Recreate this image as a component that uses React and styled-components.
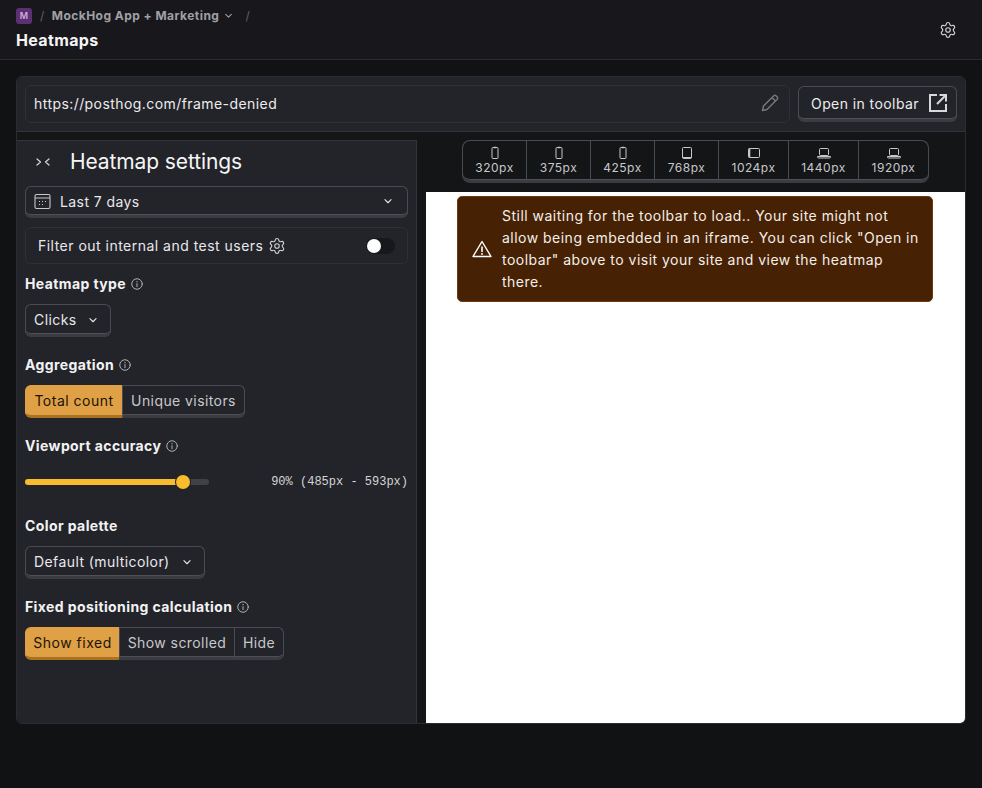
import React from 'react'
import styled, { createGlobalStyle } from 'styled-components'
import { Settings } from 'lucide-react'

const GlobalStyle = createGlobalStyle`
  html, body {
    margin: 0;
    padding: 0;
    height: 100%;
    background: #111214;
  }
  body {
    font-family: Inter, "Liberation Sans", sans-serif;
    color: #f2f2f2;
    -webkit-font-smoothing: antialiased;
  }
  * {
    box-sizing: border-box;
  }
`

const Page = styled.div`
  width: 982px;
  height: 788px;
  overflow: hidden;
  background: #111214;
`

const Header = styled.header`
  height: 60px;
  padding: 8px 16px 0;
  background: #18181c;
  border-bottom: 1px solid #2b2c32;
  display: flex;
  justify-content: space-between;
`

const Crumbs = styled.div`
  display: flex;
  align-items: center;
  height: 16px;
  font-size: 12px;
  font-weight: 700;
  letter-spacing: 0.46px;
  line-height: 14px;
  color: #a0a1a6;
`

const CrumbText = styled.span`
  display: flex;
  align-items: center;
  margin-top: -1px;
`

const Avatar = styled.span`
  width: 16px;
  height: 16px;
  border-radius: 3px;
  background: #5d2f73;
  color: #c9b0d6;
  font-size: 9px;
  font-weight: 600;
  letter-spacing: 0;
  display: flex;
  align-items: center;
  justify-content: center;
`

const Slash = styled.span`
  color: #5f6066;
  font-weight: 400;
  margin: ${p => p.$margin};
`

const CrumbChevron = styled.span`
  display: flex;
  margin-left: 3px;
`

const PageTitle = styled.h1`
  margin: 6px 0 0;
  font-size: 16px;
  line-height: 20px;
  font-weight: 700;
  letter-spacing: 0.35px;
  color: #f5f5f5;
`

const IconButton = styled.button`
  border: 0;
  padding: 0;
  margin: 13px 9px 0 0;
  width: 18px;
  height: 18px;
  background: none;
  color: #d5d5d8;
  display: flex;
`

const Card = styled.section`
  margin: 16px 16px 0;
  width: 950px;
  height: 648px;
  border: 1px solid #2b2c32;
  border-radius: 6px;
  overflow: hidden;
  background: #141517;
  display: flex;
  flex-direction: column;
`

const UrlBar = styled.div`
  height: 55px;
  flex: none;
  padding: 8px 8px 0;
  background: #23242a;
  border-bottom: 1px solid #33343a;
  display: flex;
  gap: 8px;
`

const UrlInput = styled.div`
  width: 765px;
  height: 38px;
  padding: 0 9px 2px 8px;
  border: 1px solid #2f3036;
  border-radius: 6px;
  background: #23242a;
  display: flex;
  align-items: center;
  justify-content: space-between;
  font-size: 14px;
  letter-spacing: 0.43px;
  color: #ededee;
`

const Raised = styled.button`
  font-family: inherit;
  color: ${p => (p.$active ? '#1b1407' : '#e4e4e6')};
  background: ${p => (p.$active ? '#e0a045' : 'transparent')};
  border: 1px solid ${p => (p.$active ? '#e0a045' : '#4a4b52')};
  border-bottom: 3px solid ${p => (p.$active ? '#a9721f' : '#3b3c42')};
  box-shadow: ${p => (p.$active ? 'none' : 'inset 0 -1px 0 #4f5057')};
  font-size: 14px;
  letter-spacing: 0.42px;
  display: flex;
  align-items: center;
  padding: 0;
`

const ToolbarButton = styled(Raised)`
  width: 159px;
  height: 36px;
  margin-top: 1px;
  padding: 0 8px 0 12px;
  justify-content: space-between;
  border-radius: 6px;
  color: #ededee;
`

const Body = styled.div`
  flex: 1;
  min-height: 0;
  display: flex;
`

const Sidebar = styled.aside`
  width: 400px;
  flex: none;
  margin-top: 8px;
  padding: 0 8px;
  background: #23242a;
  border-top: 1px solid #33343a;
  border-right: 1px solid #33343a;
  display: flex;
  flex-direction: column;
`

const SidebarHead = styled.div`
  height: 45px;
  padding-bottom: 4px;
  display: flex;
  align-items: center;
  color: #d8d8da;
`

const CollapseIcon = styled.span`
  display: flex;
  width: 37px;
  margin-left: 10px;
`

const SidebarTitle = styled.h2`
  margin: 0 0 0 -2px;
  font-size: 21px;
  line-height: 28px;
  font-weight: 400;
  letter-spacing: -0.1px;
  color: #f5f5f5;
`

const DateSelect = styled(Raised)`
  width: 383px;
  height: 32px;
  padding: 0 12px 0 8px;
  border-radius: 6px;
  gap: 9px;
  color: #e8e8ea;
`

const Grow = styled.span`
  flex: 1;
  text-align: left;
`

const FilterRow = styled.div`
  margin-top: 9px;
  width: 383px;
  height: 37px;
  padding: 0 12px;
  border: 1px solid #2f3036;
  border-radius: 6px;
  display: flex;
  align-items: center;
  font-size: 14px;
  letter-spacing: 0.48px;
  color: #e8e8ea;
`

const FilterIcon = styled.span`
  display: flex;
  margin-left: 5px;
  flex: 1;
  color: #cfcfd2;
`

const Switch = styled.span`
  width: 29px;
  height: 16px;
  border-radius: 8px;
  background: #17181b;
  display: flex;
  align-items: center;
  &::before {
    content: '';
    width: 14px;
    height: 14px;
    margin-left: 1px;
    border-radius: 50%;
    background: #fff;
  }
`

const Label = styled.div`
  margin-top: ${p => p.$top || 0}px;
  height: 20px;
  padding-bottom: 1px;
  display: flex;
  align-items: center;
  gap: 4px;
  font-size: 14px;
  font-weight: 700;
  letter-spacing: 0.4px;
  color: #f2f2f3;
  svg {
    color: #b4b4b8;
  }
`

const Select = styled(Raised)`
  margin-top: 10px;
  width: ${p => p.$width}px;
  height: 33px;
  padding: 0 ${p => p.$right}px 0 8px;
  border-radius: 6px;
  justify-content: space-between;
  color: #e8e8ea;
`

const Segmented = styled.div`
  margin-top: 10px;
  display: flex;
  height: 33px;
`

const Segment = styled(Raised)`
  width: ${p => p.$width}px;
  height: 33px;
  justify-content: center;
  margin-left: ${p => (p.$first ? 0 : -1)}px;
  color: ${p => (p.$active ? '#1b1407' : '#c8c8cb')};
  letter-spacing: ${p => (p.$active ? 0.5 : 0.42)}px;
  border-radius: ${p => (p.$first ? '6px 0 0 6px' : p.$last ? '0 6px 6px 0' : '0')};
`

const SliderRow = styled.div`
  margin-top: 18px;
  height: 16px;
  display: flex;
  align-items: center;
  justify-content: space-between;
`

const Track = styled.div`
  position: relative;
  width: 184px;
  height: 6px;
  border-radius: 3px;
  background: #404147;
`

const Fill = styled.div`
  height: 6px;
  border-radius: 3px;
  background: #f8bc2d;
`

const Thumb = styled.div`
  position: absolute;
  top: -4px;
  width: 14px;
  height: 14px;
  border-radius: 50%;
  background: #f8bc2d;
  box-shadow: 0 0 0 1px #23242a;
`

const SliderValue = styled.span`
  font-family: "Liberation Mono", monospace;
  font-size: 12px;
  color: #d4d4d6;
`

const Preview = styled.div`
  flex: 1;
  min-width: 0;
  display: flex;
  flex-direction: column;
`

const ViewportBar = styled.div`
  height: 60px;
  flex: none;
  padding: 8px 0 0 45px;
  display: flex;
`

const ViewportGroup = styled.div`
  display: flex;
  height: 43px;
  border: 1px solid #4a4b52;
  border-bottom: 3px solid #3b3c42;
  box-shadow: inset 0 -1px 0 #4f5057;
  border-radius: 8px;
  overflow: hidden;
`

const Viewport = styled.div`
  width: ${p => p.$width}px;
  padding-top: 5px;
  display: flex;
  flex-direction: column;
  align-items: center;
  font-size: 12px;
  line-height: 16px;
  letter-spacing: 0.5px;
  color: #c8c8cb;
  & + & {
    border-left: 1px solid #4a4b52;
  }
  svg {
    display: block;
  }
`

const Frame = styled.div`
  flex: 1;
  margin-left: 9px;
  background: #fff;
  padding: 4px 0 0 31px;
`

const Banner = styled.div`
  width: 476px;
  height: 106px;
  padding: 0 10px 0 14px;
  background: #472104;
  border: 1px solid #6d3a10;
  border-radius: 5px;
  display: flex;
  align-items: center;
  gap: 10px;
  font-size: 14px;
  line-height: 22px;
  letter-spacing: 0.48px;
  color: #f3efe9;
  svg {
    flex: none;
  }
`

const Chevron = ({ size = 14 }) => (
  <svg width={size} height={size} viewBox="0 0 16 16" fill="none" stroke="currentColor" strokeWidth="1.25" strokeLinecap="round" strokeLinejoin="round">
    <path d="M4.5 6.5 8 10l3.5-3.5" />
  </svg>
)

const Info = () => (
  <svg width="14" height="14" viewBox="0 0 16 16" fill="none" stroke="currentColor" strokeWidth="1.1" strokeLinecap="round">
    <circle cx="8" cy="8" r="6" />
    <path d="M8 7.5V11" />
    <path d="M8 5.2v.1" strokeWidth="1.4" />
  </svg>
)

const Pencil = () => (
  <svg width="20" height="20" viewBox="0 0 20 20" fill="none" stroke="#77787d" strokeWidth="1.4" strokeLinejoin="round">
    <path d="M2.5 17.5 3.5 13 13.8 2.8a1.6 1.6 0 0 1 2.2 0l1.2 1.2a1.6 1.6 0 0 1 0 2.2L7 16.5z" />
    <path d="m12 4.5 3.5 3.5" />
  </svg>
)

const OpenIcon = () => (
  <svg width="20" height="20" viewBox="0 0 20 20" fill="none" stroke="#d8d8da" strokeWidth="2">
    <path d="M9 2H2v16h16v-7" />
    <path d="M11.5 2H18v6.5M18 2 9 11" />
  </svg>
)

const Calendar = () => (
  <svg width="17" height="17" viewBox="0 0 17 17" fill="none" stroke="#c8c8cb" strokeWidth="1.1">
    <rect x="1" y="1.5" width="15" height="14" rx="1.5" />
    <path d="M1 5h15" />
    <path d="M5 8.5h1M8 8.5h1M11 8.5h1M5 11.5h1M8 11.5h1" strokeDasharray="1 1" />
  </svg>
)

const Collapse = () => (
  <svg width="16" height="12" viewBox="0 0 16 12" fill="none" stroke="currentColor" strokeWidth="1.2" strokeLinecap="round" strokeLinejoin="round">
    <path d="m2 3 3.5 3L2 9" />
    <path d="M14 3 10.5 6 14 9" />
  </svg>
)

const Warning = () => (
  <svg width="20" height="20" viewBox="0 0 20 20" fill="none" stroke="#fff" strokeWidth="1.4" strokeLinejoin="round" strokeLinecap="round">
    <path d="M10 2.5 19 17.5H1z" />
    <path d="M10 8v4.5" strokeWidth="1.6" />
    <path d="M10 14.8v.2" strokeWidth="1.8" />
  </svg>
)

const DeviceIcon = ({ type }) => {
  if (type === 'phone') {
    return (
      <svg width="16" height="14" viewBox="0 0 16 14" fill="none" stroke="#c8c8cb" strokeWidth="1">
        <rect x="5" y="1.5" width="6" height="11" rx="1" />
        <path d="M7 1.5h2" strokeWidth="1.4" />
      </svg>
    )
  }
  if (type === 'tablet') {
    return (
      <svg width="16" height="14" viewBox="0 0 16 14" fill="none" stroke="#c8c8cb" strokeWidth="1">
        <rect x="3.5" y="1.5" width="9" height="11" rx="1" />
        <path d="M3.5 11.5h9" />
      </svg>
    )
  }
  if (type === 'wide') {
    return (
      <svg width="16" height="14" viewBox="0 0 16 14" fill="none" stroke="#c8c8cb" strokeWidth="1">
        <rect x="2.5" y="2.5" width="11" height="9" rx="1" />
        <path d="M3.5 2.5v9" strokeWidth="1.6" />
      </svg>
    )
  }
  return (
    <svg width="16" height="14" viewBox="0 0 16 14" fill="none" stroke="#c8c8cb" strokeWidth="1">
      <rect x="3.5" y="2.5" width="9" height="7" rx="1" />
      <path d="M1.5 10.5h13v.5a1 1 0 0 1-1 1h-11a1 1 0 0 1-1-1z" />
    </svg>
  )
}

const viewports = [
  { label: '320px', type: 'phone', width: 63 },
  { label: '375px', type: 'phone', width: 64 },
  { label: '425px', type: 'phone', width: 64 },
  { label: '768px', type: 'tablet', width: 64 },
  { label: '1024px', type: 'wide', width: 70 },
  { label: '1440px', type: 'laptop', width: 70 },
  { label: '1920px', type: 'laptop', width: 70 }
]

function App() {
  return (
    <Page>
      <GlobalStyle />
      <Header>
        <div>
          <Crumbs>
            <Avatar>M</Avatar>
            <Slash $margin="0 7px 0 8px">/</Slash>
            <CrumbText>
              MockHog App + Marketing
              <CrumbChevron><Chevron size={13} /></CrumbChevron>
              <Slash $margin="0 0 0 10px">/</Slash>
            </CrumbText>
          </Crumbs>
          <PageTitle>Heatmaps</PageTitle>
        </div>
        <IconButton><Settings size={18} strokeWidth={1.5} /></IconButton>
      </Header>
      <Card>
        <UrlBar>
          <UrlInput>
            https://posthog.com/frame-denied
            <Pencil />
          </UrlInput>
          <ToolbarButton>
            Open in toolbar
            <OpenIcon />
          </ToolbarButton>
        </UrlBar>
        <Body>
          <Sidebar>
            <SidebarHead>
              <CollapseIcon><Collapse /></CollapseIcon>
              <SidebarTitle>Heatmap settings</SidebarTitle>
            </SidebarHead>
            <DateSelect>
              <Calendar />
              <Grow>Last 7 days</Grow>
              <Chevron />
            </DateSelect>
            <FilterRow>
              Filter out internal and test users
              <FilterIcon><Settings size={18} strokeWidth={1.5} /></FilterIcon>
              <Switch />
            </FilterRow>
            <Label $top={10}>Heatmap type <Info /></Label>
            <Select $width={86} $right={10}>Clicks <Chevron /></Select>
            <Label $top={18}>Aggregation <Info /></Label>
            <Segmented>
              <Segment $first $active $width={98}>Total count</Segment>
              <Segment $last $width={123}>Unique visitors</Segment>
            </Segmented>
            <Label $top={18}>Viewport accuracy <Info /></Label>
            <SliderRow>
              <Track>
                <Fill style={{ width: '86%' }} />
                <Thumb style={{ left: 151 }} />
              </Track>
              <SliderValue>90% (485px - 593px)</SliderValue>
            </SliderRow>
            <Label $top={26}>Color palette</Label>
            <Select $width={180} $right={10}>Default (multicolor) <Chevron /></Select>
            <Label $top={18}>Fixed positioning calculation <Info /></Label>
            <Segmented>
              <Segment $first $active $width={95}>Show fixed</Segment>
              <Segment $width={116}>Show scrolled</Segment>
              <Segment $last $width={50}>Hide</Segment>
            </Segmented>
          </Sidebar>
          <Preview>
            <ViewportBar>
              <ViewportGroup>
                {viewports.map(v => (
                  <Viewport key={v.label} $width={v.width}>
                    <DeviceIcon type={v.type} />
                    {v.label}
                  </Viewport>
                ))}
              </ViewportGroup>
            </ViewportBar>
            <Frame>
              <Banner>
                <Warning />
                <span>
                  Still waiting for the toolbar to load.. Your site might not allow being embedded in an iframe. You can click "Open in toolbar" above to visit your site and view the heatmap there.
                </span>
              </Banner>
            </Frame>
          </Preview>
        </Body>
      </Card>
    </Page>
  )
}

export default App
